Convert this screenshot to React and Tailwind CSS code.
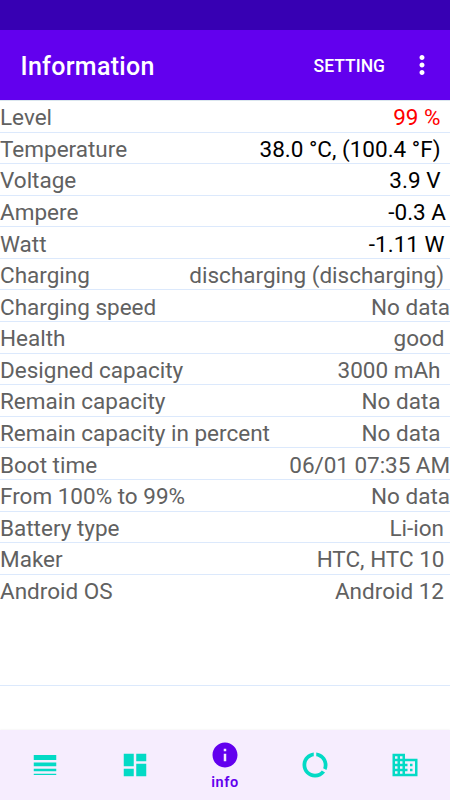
import {
  MdBusiness,
  MdDashboard,
  MdDataUsage,
  MdInfo,
  MdLineWeight,
  MdMoreVert
} from 'react-icons/md';

const rows = [
  { label: 'Level', value: '99 %', style: 'pr-[9.5px] text-[#ff0000]' },
  { label: 'Temperature', value: '38.0 °C, (100.4 °F)', style: 'pr-[9.5px] text-black' },
  { label: 'Voltage', value: '3.9 V', style: 'pr-[9.5px] text-black' },
  { label: 'Ampere', value: '-0.3 A', style: 'pr-[4px] text-black' },
  { label: 'Watt', value: '-1.11 W', style: 'pr-[5.5px] text-black' },
  { label: 'Charging', value: 'discharging (discharging)', style: 'pr-[6px]' },
  { label: 'Charging speed', value: 'No data', style: '' },
  { label: 'Health', value: 'good', style: 'pr-[5.5px]' },
  { label: 'Designed capacity', value: '3000 mAh', style: 'pr-[9.5px]' },
  { label: 'Remain capacity', value: 'No data', style: 'pr-[9.5px]' },
  { label: 'Remain capacity in percent', value: 'No data', style: 'pr-[9.5px]' },
  { label: 'Boot time', value: '06/01 07:35 AM', style: 'tracking-[-0.05px]' },
  { label: 'From 100% to 99%', value: 'No data', style: '' },
  { label: 'Battery type', value: 'Li-ion', style: 'pr-[6px]' },
  { label: 'Maker', value: 'HTC, HTC 10', style: 'pr-[5.5px]' },
  { label: 'Android OS', value: 'Android 12', style: 'pr-[6px]' }
];

const tabs = [
  { id: 'list', Icon: MdLineWeight },
  { id: 'dashboard', Icon: MdDashboard },
  { id: 'info', Icon: MdInfo, label: 'info' },
  { id: 'usage', Icon: MdDataUsage },
  { id: 'business', Icon: MdBusiness }
];

const InfoRow = ({ label, value, style, last }) => (
  <div
    className={`flex h-[31.58px] shrink-0 items-center justify-between pt-[3.6px] whitespace-nowrap ${
      last ? '' : 'border-b border-[#dce9fc]'
    }`}
  >
    <span>{label}</span>
    <span className={style}>{value}</span>
  </div>
);

const App = () => {
  return (
    <div className="flex h-[800px] w-[450px] flex-col overflow-hidden bg-white font-['Roboto',sans-serif]">
      {/* Status bar */}
      <div className="h-[30px] shrink-0 bg-[#3700b3]" />

      <header className="flex h-[70px] shrink-0 items-center bg-[#6200ee] pr-[13px] pl-[20.5px] text-white">
        <h1 className="flex-1 pt-[3px] text-[25px] font-medium tracking-[0.3px]">Information</h1>
        <button className="pt-[2px] text-[17.5px] font-medium">SETTING</button>
        <button className="ml-[22px]" aria-label="More options">
          <MdMoreVert size={30} />
        </button>
      </header>

      <main className="flex flex-1 flex-col border-t border-b border-t-[#dbe6ee] border-b-[#dce9fc] text-[22.5px] text-[#616161]">
        {rows.map((row, index) => (
          <InfoRow key={row.label} {...row} last={index === rows.length - 1} />
        ))}
      </main>

      {/* Ad slot */}
      <div className="h-11 shrink-0" />

      <nav className="grid h-[70px] shrink-0 grid-cols-5 bg-[#f6edfe] shadow-[0_0_2px_rgba(0,0,0,0.08)]">
        {tabs.map(({ id, Icon, label }) => (
          <button
            key={id}
            aria-label={id}
            className={`flex flex-col items-center ${
              label ? 'pt-[10px] text-[#6200ee]' : 'pt-5 text-[#03dac5]'
            }`}
          >
            <Icon size={30} />
            {label && (
              <span className="mt-1 text-[14.5px] leading-[18px] font-semibold tracking-[0.6px]">{label}</span>
            )}
          </button>
        ))}
      </nav>
    </div>
  );
};

export default App;
